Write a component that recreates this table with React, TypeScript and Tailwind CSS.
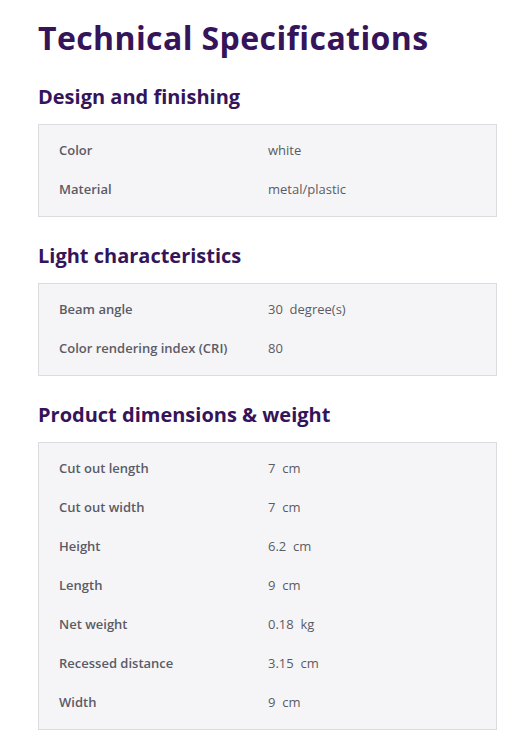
import React from "react";

const sections: { title: string; rows: [string, string][] }[] = [
  {
    title: "Design and finishing",
    rows: [
      ["Color", "white"],
      ["Material", "metal/plastic"],
    ],
  },
  {
    title: "Light characteristics",
    rows: [
      ["Beam angle", "30\u00a0 degree(s)"],
      ["Color rendering index (CRI)", "80"],
    ],
  },
  {
    title: "Product dimensions & weight",
    rows: [
      ["Cut out length", "7\u00a0 cm"],
      ["Cut out width", "7\u00a0 cm"],
      ["Height", "6.2\u00a0 cm"],
      ["Length", "9\u00a0 cm"],
      ["Net weight", "0.18\u00a0 kg"],
      ["Recessed distance", "3.15\u00a0 cm"],
      ["Width", "9\u00a0 cm"],
    ],
  },
];

export default function App() {
  return (
    <div
      className="min-h-[751px] bg-white pl-[38px] pr-[22px] pt-[16px] pb-[20px]"
      style={{ fontFamily: "'Open Sans', Lato, sans-serif" }}
    >
      <h1 className="text-[32px] leading-[44px] font-bold text-[#35145a] tracking-[0.4px]">
        Technical Specifications
      </h1>
      {sections.map((s, i) => (
        <div key={s.title} className={i === 0 ? "mt-[23px]" : "mt-[25px]"}>
          <h2 className="text-[20px] leading-[28px] font-bold text-[#35145a]">{s.title}</h2>
          <div className="mt-[13px] border border-[#dcdce0] bg-[#f5f5f7] pt-[6px] pb-[7px]">
            {s.rows.map(([k, v]) => (
              <div key={k} className="flex h-[39px] items-center text-[13px]">
                <div className="w-[229px] pl-[20px] font-semibold text-[#5b5b66]">{k}</div>
                <div className="text-[#5b5b63]">{v}</div>
              </div>
            ))}
          </div>
        </div>
      ))}
    </div>
  );
}
